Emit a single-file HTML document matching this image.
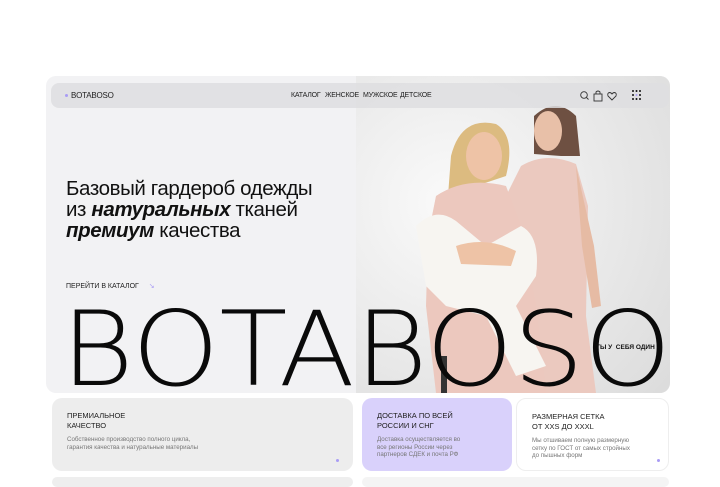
<!DOCTYPE html>
<html><head><meta charset="utf-8"><style>
*{margin:0;padding:0;box-sizing:border-box}
body{width:720px;height:480px;background:#fff;position:relative;overflow:hidden;font-family:"Liberation Sans",sans-serif;color:#111}
.abs{position:absolute}
.hero{left:46px;top:76px;width:624px;height:317px;border-radius:10px;overflow:hidden;background:#f2f2f4}
.nav{left:51px;top:83px;width:618px;height:25px;border-radius:8px;background:rgba(222,222,224,0.85)}
.nav span{position:absolute;font-size:7px;top:9px;color:#222;letter-spacing:-0.2px}
h1{position:absolute;left:66px;top:178px;font-size:20.5px;font-weight:normal;line-height:21px;letter-spacing:-0.4px;color:#111}
h1 b{font-style:italic;font-weight:bold}
.big{left:61px;top:299px;font-family:"DejaVu Sans","Liberation Sans",sans-serif;font-weight:200;font-size:103px;letter-spacing:0;line-height:103px;color:#0a0a0a;white-space:nowrap;transform:scaleX(1.08);transform-origin:left top}
.card{position:absolute;top:398px;height:73px;border-radius:10px}
.card h3{position:absolute;left:15px;top:13px;font-size:7.5px;font-weight:normal;line-height:9.5px;color:#222}
.card p{position:absolute;left:15px;top:38px;font-size:6.2px;line-height:7.5px;color:#777}
.dot{position:absolute;width:3px;height:3px;border-radius:50%;background:#a99cf5}
</style></head><body>
<div class="abs hero">
<svg class="abs" style="left:310px;top:0" width="314" height="317" viewBox="0 0 314 317">
<defs><radialGradient id="bg" cx="0.3" cy="0.4" r="0.9"><stop offset="0" stop-color="#fafafa"/><stop offset="1" stop-color="#dcdcdc"/></radialGradient></defs>
<rect width="314" height="317" fill="url(#bg)"/>
<path d="M178 40 Q200 20 220 40 L224 80 L205 80 L178 78 Z" fill="#6e5042"/>
<ellipse cx="192" cy="55" rx="14" ry="20" fill="#e8c0a8"/>
<path d="M165 90 Q190 75 220 88 L232 130 L230 240 L240 317 L170 317 L160 200 L150 120 Z" fill="#ebc9bf"/>
<path d="M220 90 L238 170 L245 230 L236 232 L226 170 Z" fill="#e6bba4"/>
<path d="M95 80 Q105 40 140 48 Q160 60 150 100 L120 110 L92 120 Z" fill="#dcbb80"/>
<ellipse cx="128" cy="80" rx="18" ry="24" fill="#eec3a6"/>
<path d="M80 120 Q110 100 150 110 L165 150 L180 230 L190 317 L80 317 L70 230 L72 160 Z" fill="#ecc8be"/>
<path d="M60 150 Q80 130 100 145 L130 170 L165 150 Q185 160 180 200 L160 230 L190 290 L160 300 L130 240 L90 230 L70 210 Z" fill="#f7f5f1"/>
<path d="M100 170 Q130 160 160 175 L155 190 L105 188 Z" fill="#eec3a6"/>
<rect x="85" y="280" width="6" height="37" fill="#333"/>
</svg>
</div>
<div class="abs nav">
<div class="dot" style="left:14px;top:11px"></div>
<span style="left:20px;top:8px;font-size:8px">BOTABOSO</span>
<span style="left:240px">КАТАЛОГ</span>
<span style="left:274px">ЖЕНСКОЕ</span>
<span style="left:312px">МУЖСКОЕ</span>
<span style="left:349px">ДЕТСКОЕ</span>
<svg class="abs" style="left:527px;top:6px" width="70" height="14" viewBox="0 0 70 14">
<circle cx="6" cy="6" r="3.3" fill="none" stroke="#333" stroke-width="0.9"/><line x1="8.5" y1="8.5" x2="10.5" y2="10.5" stroke="#333" stroke-width="0.9"/>
<rect x="16" y="5" width="8" height="7" fill="none" stroke="#333" stroke-width="0.9"/><path d="M18 5 V3 Q20 1 22 3 V5" fill="none" stroke="#333" stroke-width="0.9"/>
<path d="M34 11 L30 7 Q29 4 31.5 3.5 Q33 3.5 34 5 Q35 3.5 36.5 3.5 Q39 4 38 7 Z" fill="none" stroke="#333" stroke-width="0.9"/>
<g fill="#111"><circle cx="55" cy="2" r="1"/><circle cx="58.5" cy="2" r="1"/><circle cx="62" cy="2" r="1"/><circle cx="55" cy="6" r="1"/><circle cx="58.5" cy="6" r="1" fill="#a99cf5"/><circle cx="62" cy="6" r="1"/><circle cx="55" cy="10" r="1"/><circle cx="58.5" cy="10" r="1"/><circle cx="62" cy="10" r="1"/></g>
</svg>
</div>
<h1>Базовый гардероб одежды<br>из <b>натуральных</b> тканей<br><b>премиум</b> качества</h1>
<div class="abs" style="left:66px;top:282px;font-size:7px;color:#222">ПЕРЕЙТИ В КАТАЛОГ <span style="color:#a99cf5;margin-left:8px">↘</span></div>
<div class="abs big">BOTABOSO</div>
<div class="abs" style="left:596px;top:344px;font-size:6.5px;font-weight:bold;color:#111">ТЫ У&nbsp; СЕБЯ ОДИН</div>
<div class="card" style="left:52px;width:301px;background:#ededed"><h3>ПРЕМИАЛЬНОЕ<br>КАЧЕСТВО</h3><p>Собственное производство полного цикла,<br>гарантия качества и натуральные материалы</p><div class="dot" style="left:284px;top:61px"></div></div>
<div class="card" style="left:362px;width:150px;background:#d9d1fb"><h3>ДОСТАВКА ПО ВСЕЙ<br>РОССИИ И СНГ</h3><p>Доставка осуществляется во<br>все регионы России через<br>партнеров СДЕК и почта РФ</p></div>
<div class="card" style="left:516px;width:153px;background:#fff;border:1px solid #eee"><h3>РАЗМЕРНАЯ СЕТКА<br>ОТ XXS ДО XXXL</h3><p>Мы отшиваем полную размерную<br>сетку по ГОСТ от самых стройных<br>до пышных форм</p><div class="dot" style="left:140px;top:60px"></div></div>
<div class="abs" style="left:52px;top:477px;width:301px;height:10px;border-radius:8px;background:#eee"></div>
<div class="abs" style="left:362px;top:477px;width:307px;height:10px;border-radius:8px;background:#f4f4f4"></div>
</body></html>
